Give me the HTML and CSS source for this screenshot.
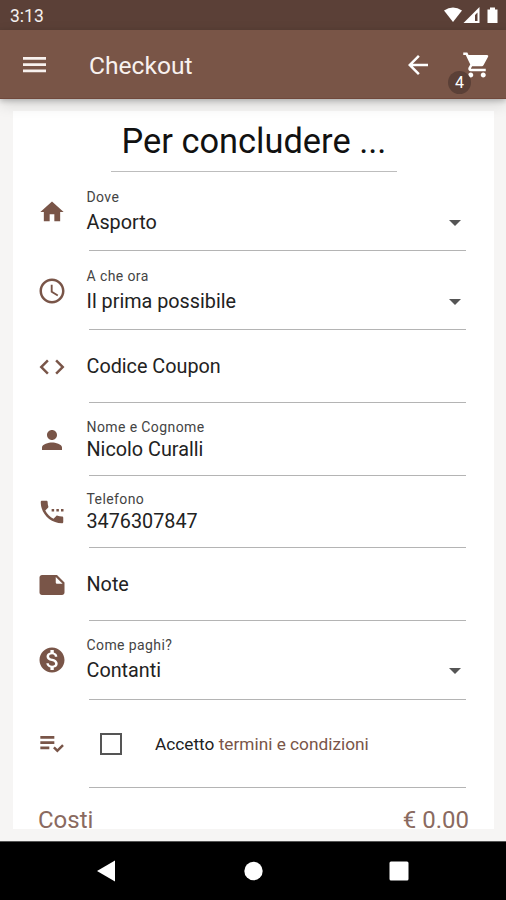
FILE: index.html
```html
<!DOCTYPE html>
<html lang="it">
<head>
<meta charset="utf-8">
<title>Checkout</title>
<link rel="stylesheet" href="styles.css">
</head>
<body>
<div class="status"><span>3:13</span>
  <svg class="status-icons" viewBox="0 0 60 20"><path d="M1 4.5Q10 -1.5 19 4.5L10 16Z"/><path fill-rule="evenodd" d="M20.500 17L36.500 1V17ZM32 9V15H34.500V6.500Z"/><path d="M47 1.500h5v2h2.500V17h-10V3.500H47Z"/></svg>
</div>
<header class="appbar">
  <svg class="menu" viewBox="0 0 24 18"><path d="M0 1h23v2.700H0zM0 7.200h23v2.700H0zM0 13.500h23v2.700H0z"/></svg>
  <h1>Checkout</h1>
  <svg class="back" viewBox="0 0 24 24"><path d="M20 11H7.830l5.590-5.590L12 4l-8 8 8 8 1.410-1.410L7.830 13H20v-2z"/></svg>
  <div class="cart">
    <svg viewBox="0 0 24 24"><path d="M7 18c-1.100 0-1.990.9-1.990 2S5.900 22 7 22s2-.9 2-2-.9-2-2-2zM1 2v2h2l3.600 7.590-1.350 2.450c-.16.280-.25.610-.25.960 0 1.100.9 2 2 2h12v-2H7.420c-.14 0-.25-.11-.25-.25l.03-.12.9-1.630h7.450c.75 0 1.410-.41 1.750-1.030l3.580-6.490A1 1 0 0 0 20 4H5.210l-.94-2H1zm16 16c-1.100 0-1.990.9-1.990 2s.89 2 1.990 2 2-.9 2-2-.9-2-2-2z"/></svg>
    <span class="badge">4</span>
  </div>
</header>
<main>
  <section class="card">
    <h2>Per concludere ...</h2>
    <div class="row r-dove">
      <svg class="icon icon-small" viewBox="0 0 24 24"><path d="M10 20v-6h4v6h5v-8h3L12 3 2 12h3v8z"/></svg>
      <div class="field"><label>Dove</label><p>Asporto</p><i class="caret"></i></div>
    </div>
    <div class="row r-ora">
      <svg class="icon" viewBox="0 0 24 24"><path d="M11.990 2C6.470 2 2 6.480 2 12s4.470 10 9.990 10C17.520 22 22 17.520 22 12S17.520 2 11.990 2zM12 20c-4.420 0-8-3.580-8-8s3.580-8 8-8 8 3.580 8 8-3.580 8-8 8zm.5-13H11v6l5.250 3.150.75-1.230-4.500-2.670z"/></svg>
      <div class="field"><label>A che ora</label><p>Il prima possibile</p><i class="caret"></i></div>
    </div>
    <div class="row r-coupon">
      <svg class="icon" viewBox="0 0 24 24"><path d="M9.400 16.600L4.800 12l4.600-4.600L8 6l-6 6 6 6 1.400-1.400zm5.200 0l4.600-4.600-4.600-4.600L16 6l6 6-6 6-1.400-1.400z"/></svg>
      <div class="field"><p>Codice Coupon</p></div>
    </div>
    <div class="row r-nome">
      <svg class="icon" viewBox="0 0 24 24"><path d="M12 12c2.210 0 4-1.790 4-4s-1.790-4-4-4-4 1.790-4 4 1.790 4 4 4zm0 2c-2.670 0-8 1.340-8 4v2h16v-2c0-2.660-5.330-4-8-4z"/></svg>
      <div class="field tight"><label>Nome e Cognome</label><p>Nicolo Curalli</p></div>
    </div>
    <div class="row r-tel">
      <svg class="icon" viewBox="0 0 24 24"><path d="M13.700 9.500h-2v2h2zM17.500 9.500h-2v2h2zM21.200 9.500h-2v2h2zM20 15.500c-1.250 0-2.450-.2-3.570-.57-.1-.03-.21-.05-.31-.05-.26 0-.51.1-.71.290l-2.200 2.200c-2.830-1.440-5.150-3.750-6.590-6.580l2.200-2.210c.28-.27.36-.66.25-1.010C8.700 6.450 8.500 5.250 8.500 4c0-.55-.45-1-1-1H4c-.55 0-1 .45-1 1 0 9.390 7.610 17 17 17 .55 0 1-.45 1-1v-3.500c0-.55-.45-1-1-1z"/></svg>
      <div class="field tight"><label>Telefono</label><p>3476307847</p></div>
    </div>
    <div class="row r-note">
      <svg class="icon" viewBox="0 0 24 24"><path fill-rule="evenodd" d="M22 10l-6-6H4c-1.100 0-2 .9-2 2v12.010c0 1.100.9 1.990 2 1.990l16-.01c1.100 0 2-.89 2-1.990v-8zM15 10V5.500l5.500 5.500H16a1 1 0 0 1-1-1z"/></svg>
      <div class="field"><p>Note</p></div>
    </div>
    <div class="row r-paghi">
      <svg class="icon" viewBox="0 0 24 24"><path d="M12 2C6.480 2 2 6.480 2 12s4.480 10 10 10 10-4.480 10-10S17.520 2 12 2zm1.410 16.090V20h-2.670v-1.930c-1.710-.36-3.160-1.460-3.270-3.400h1.960c.1 1.050.82 1.870 2.650 1.870 1.960 0 2.400-.98 2.400-1.590 0-.83-.44-1.610-2.670-2.140-2.480-.6-4.180-1.620-4.180-3.670 0-1.720 1.390-2.840 3.110-3.210V4h2.670v1.950c1.860.45 2.790 1.860 2.850 3.390H14.300c-.05-1.110-.64-1.870-2.220-1.870-1.500 0-2.400.68-2.400 1.640 0 .84.65 1.390 2.670 1.910s4.180 1.390 4.180 3.910c-.01 1.830-1.380 2.830-3.120 3.160z"/></svg>
      <div class="field"><label>Come paghi?</label><p>Contanti</p><i class="caret"></i></div>
    </div>
    <div class="row r-terms">
      <svg class="icon icon-small" viewBox="0 0 24 24"><path d="M2 5.200h12v2.200H2zM2 9.700h12v2.200H2zM2 14.200h7.700v2.200H2zM12.900 15.600L16.600 19.300l5.600-5.600-1.500-1.500-4.100 4.100-2.200-2.200z"/></svg>
      <div class="field terms"><i class="check"></i><span>Accetto <a>termini e condizioni</a></span></div>
    </div>
    <div class="costs"><span>Costi</span><span>€ 0.00</span></div>
  </section>
</main>
<nav>
  <svg viewBox="0 0 20 22"><path d="M0 11L18 0.500V21.500Z"/></svg>
  <svg viewBox="0 0 20 22"><circle cx="10.500" cy="11" r="9.200"/></svg>
  <svg viewBox="0 0 20 22"><rect x=".5" y="1.500" width="19" height="19" rx="1.500"/></svg>
</nav>
</body>
</html>
```
FILE: styles.css
```css
* { box-sizing: border-box; margin: 0; padding: 0; }
body { width: 506px; height: 900px; overflow: hidden; display: flex; flex-direction: column; font-family: Roboto, sans-serif; color: #222; background: #f6f5f4; }
svg { display: block; fill: currentColor; flex: none; }
.status { height: 30px; flex: none; background: #5b4037; color: #f5f1ef; display: flex; align-items: center; justify-content: space-between; padding: 2px 0 0 10px; font-size: 17.500px; }
.status-icons { width: 60px; height: 20px; margin-right: 3px; color: #fff; }
.appbar { height: 69px; flex: none; background: #795547; color: #f8f1ee; display: flex; align-items: center; padding: 1px 14px 0 23px; position: relative; z-index: 1; border-bottom: 1px solid #70483b; box-shadow: 0 2px 5px rgba(0,0,0,.2), 0 5px 14px rgba(0,0,0,.14); }
.menu { width: 24px; height: 18px; }
h1 { font-size: 24.600px; font-weight: 400; margin-left: 42px; line-height: 30px; flex: 1; padding-top: 2px; }
.back { width: 30px; height: 30px; margin-right: 29px; color: #fff; }
.cart { position: relative; color: #fff; width: 30px; height: 30px; }
.cart svg { width: 30px; height: 30px; }
.badge { position: absolute; left: -14px; top: 21px; width: 23px; height: 23px; border-radius: 50%; background: #5b4037; font-size: 16px; line-height: 23px; text-align: center; }
main { flex: 1; padding: 12px 12px 12px 13px; }
.card { background: #fff; height: 718px; padding-right: 28px; }
h2 { width: 286px; height: 61px; margin-left: 98px; font-size: 34.400px; font-weight: 400; line-height: 61px; text-align: center; border-bottom: 1px solid #bdbdbd; white-space: nowrap; color: #111; }
.row { display: flex; align-items: center; padding-left: 24px; }
.icon { width: 30px; height: 30px; color: #795548; }
.icon-small { width: 28px; height: 28px; margin: 1px; }
.field { flex: 1; align-self: stretch; margin-left: 22px; position: relative; display: flex; flex-direction: column; justify-content: center; gap: 5px; }
.field::after { content: ""; position: absolute; left: 0; right: 0; bottom: 0; height: 1px; background: #b4b4b4; }
label, p { margin-left: -2.500px; white-space: nowrap; }
label { font-size: 14px; line-height: 16px; color: #444; letter-spacing: .4px; }
p { font-size: 19.800px; line-height: 24px; }
label + p { padding-top: 1px; margin-bottom: -1px; }
.field.tight { gap: 2px; }
.r-dove { height: 79px; }
.r-ora { height: 79px; }
.r-coupon { height: 73px; }
.r-nome { height: 73px; }
.r-tel { height: 72px; }
.r-note { height: 73px; }
.r-paghi { height: 79px; }
.r-paghi .icon { margin-top: -1px; }
.r-paghi label { margin-top: -2px; }
.r-terms { height: 88px; }
.caret { position: absolute; right: 5px; top: 48px; border: 6px solid transparent; border-top-color: #555; border-bottom: 0; }
.r-paghi .caret { top: 47px; }
.field.terms { flex-direction: row; align-items: center; justify-content: flex-start; gap: 33px; padding-left: 11px; font-size: 17.250px; }
.check { width: 22px; height: 22px; border: 2px solid #555; flex: none; }
.terms a { color: #795548; }
.costs { display: flex; justify-content: space-between; padding: 23px 0 0 25px; margin-right: -3px; font-size: 24px; line-height: 18px; color: #8a6a60; }
nav { height: 59px; flex: none; background: #000; color: #fff; display: flex; justify-content: space-between; align-items: center; padding: 0 97px; border-top: 1px solid #555; }
nav svg { width: 20px; height: 22px; }
```
